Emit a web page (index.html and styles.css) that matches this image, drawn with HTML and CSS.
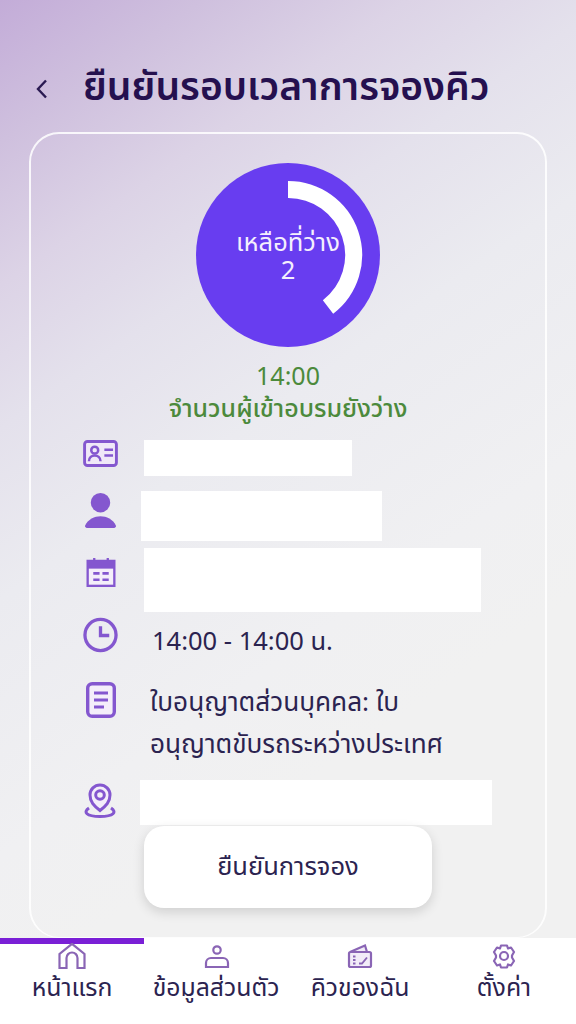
FILE: index.html
```html
<!DOCTYPE html>
<html lang="th">
<head>
<meta charset="utf-8">
<title>ยืนยันรอบเวลาการจองคิว</title>
<link rel="stylesheet" href="styles.css">
</head>
<body>
<div class="screen">
  <header class="top">
    <svg class="back" viewBox="0 0 14 22"><path d="M11 2.500 3 11l8 8.500" fill="none" stroke="#2a1a52" stroke-width="2.400"/></svg>
    <h1>ยืนยันรอบเวลาการจองคิว</h1>
  </header>
  <main class="card">
    <div class="ring">
      <svg class="ring-svg" viewBox="0 0 184 184">
        <circle cx="92" cy="92" r="92" fill="#683df0"/>
        <path d="M92 26.500A65.500 65.500 0 0 1 132 144" fill="none" stroke="#fff" stroke-width="17"/>
      </svg>
      <div class="ring-text"><span>เหลือที่ว่าง</span><span>2</span></div>
    </div>
    <div class="time">14:00</div>
    <div class="status">จำนวนผู้เข้าอบรมยังว่าง</div>
    <div class="rows">
      <div class="row r1">
        <svg class="ico" viewBox="0 0 36 28"><rect x="1.500" y="1.500" width="33" height="25" rx="3" fill="#f0e8f8" stroke="#8457cf" stroke-width="3"/><circle cx="12" cy="10.500" r="3.600" fill="none" stroke="#8457cf" stroke-width="2.600"/><path d="M6 22c0-8 12-8 12 0M22 10h9M22 16h9" fill="none" stroke="#8457cf" stroke-width="2.600"/></svg>
        <div class="blank b1"></div>
      </div>
      <div class="row r2">
        <svg class="ico" viewBox="0 0 32 36"><circle cx="16" cy="10" r="10" fill="#8457cf"/><path d="M0 34C3 27 10 24 16 24s13 3 16 10c0 1-1 2-2 2H2c-1 0-2-1-2-2z" fill="#8457cf"/></svg>
        <div class="blank b2"></div>
      </div>
      <div class="row r3">
        <svg class="ico" viewBox="0 0 30 30"><path d="M8 0v4M22 0v4" stroke="#8457cf" stroke-width="2.400"/><rect x="1.200" y="3" width="27.600" height="25.800" fill="#f4eefa" stroke="#8457cf" stroke-width="2.400"/><rect x="1" y="3" width="28" height="8" fill="#8457cf"/><path d="M7 16h6.500M16.500 16H23M7 22.500h6.500M16.500 22.500H23" stroke="#8457cf" stroke-width="2.800"/></svg>
        <div class="blank b3"></div>
      </div>
      <div class="row r4">
        <svg class="ico" viewBox="0 0 36 36"><circle cx="18" cy="18" r="16" fill="none" stroke="#8457cf" stroke-width="3.400"/><path d="M18 9v9.500h9" fill="none" stroke="#8457cf" stroke-width="3.400"/></svg>
        <div class="txt">14:00 - 14:00 น.</div>
      </div>
      <div class="row r5">
        <svg class="ico" viewBox="0 0 30 36"><rect x="1.700" y="1.700" width="26.600" height="32.600" rx="4.500" fill="#f4eefa" stroke="#8457cf" stroke-width="3.400"/><path d="M8 11h14M8 18h14M8 25h10" stroke="#8457cf" stroke-width="3"/></svg>
        <div class="txt">ใบอนุญาตส่วนบุคคล: ใบ<br>อนุญาตขับรถระหว่างประเทศ</div>
      </div>
      <div class="row r6">
        <svg class="ico" viewBox="0 0 32 36"><path d="M16 28.500C10 24 6 20 6 13a10 10 0 0 1 20 0c0 7-4 11-10 15.500z" fill="#f4eefa" stroke="#8457cf" stroke-width="3"/><circle cx="16" cy="13" r="4.300" fill="none" stroke="#8457cf" stroke-width="3"/><path d="M5 26c-6 4-3 8.500 11 8.500s17-4.500 11-8.500" fill="none" stroke="#8457cf" stroke-width="3"/></svg>
        <div class="blank b6"></div>
      </div>
    </div>
    <button class="confirm" type="button">ยืนยันการจอง</button>
  </main>
  <nav class="tabs">
    <div class="tab active">
      <svg class="tab-ico" viewBox="0 0 28 26"><path d="M1.500 25V11L14 .8 26.500 11v14h-7V15a5.500 5.500 0 0 0-11 0v10z" fill="none" stroke="#8a65b5" stroke-width="2.200"/></svg>
      <span>หน้าแรก</span>
    </div>
    <div class="tab">
      <svg class="tab-ico" viewBox="0 0 28 26"><circle cx="15" cy="7" r="3.700" fill="none" stroke="#8a65b5" stroke-width="2.200"/><path d="M4 24v-4a5 5 0 0 1 5-5h12a5 5 0 0 1 5 5v4z" fill="none" stroke="#8a65b5" stroke-width="2.200"/></svg>
      <span>ข้อมูลส่วนตัว</span>
    </div>
    <div class="tab">
      <svg class="tab-ico" viewBox="0 0 28 26"><path d="M4 9 19 2.500 21 9" fill="#f2ecf8" stroke="#8a65b5" stroke-width="2.200"/><rect x="3" y="9" width="22" height="15" rx="1.500" fill="#f2ecf8" stroke="#8a65b5" stroke-width="2.200"/><path d="M7 13.500h2.500M7 17h2.500M7 20.500h2.500M13 20.500h3l5-6" fill="none" stroke="#8a65b5" stroke-width="1.900"/></svg>
      <span>คิวของฉัน</span>
    </div>
    <div class="tab">
      <svg class="tab-ico" viewBox="0 0 28 26"><path d="M11 2.500h6l1 3 3-1 3 4.500-2 3.500v2l2 3.500-3 4.500-3-1-1 3h-6l-1-3-3 1-3-4.500 2-3.500v-2L4 9l3-4.500 3 1z" fill="none" stroke="#8a65b5" stroke-width="2.200" stroke-linejoin="round"/><circle cx="14" cy="13" r="4" fill="none" stroke="#8a65b5" stroke-width="2.200"/></svg>
      <span>ตั้งค่า</span>
    </div>
  </nav>
</div>
</body>
</html>
```
FILE: styles.css
```css
* { box-sizing: border-box; }
html, body { margin: 0; padding: 0; }
body { font-family: "Noto Sans Thai", "Noto Sans", "Open Sans", "DejaVu Sans", sans-serif; }
.screen {
  width: 576px; height: 1024px; overflow: hidden;
  display: flex; flex-direction: column;
  background: linear-gradient(145deg, #c3acd8 0%, #cfc0de 10%, #dcd3e6 20%, #e4e1ec 30%, #ebebf0 42%, #f0f0f2 60%, #f1f1f1 70%);
}
.top { height: 132px; flex: none; display: flex; align-items: center; padding: 46px 0 0 35px; }
.back { width: 14px; height: 22px; flex: none; }
h1 { margin: 0 0 0 34px; font-size: 39px; line-height: 44px; font-weight: 600; color: #25104f; white-space: nowrap; }
.card {
  flex: none; height: 806px; margin: 0 29px; border: 2px solid rgba(255,255,255,.85); border-bottom-width: 1px;
  border-radius: 30px; display: flex; flex-direction: column; align-items: center; padding-top: 29px;
}
.ring { width: 184px; height: 184px; position: relative; flex: none; }
.ring-svg { width: 184px; height: 184px; display: block; }
.ring-text {
  position: absolute; inset: 0; display: flex; flex-direction: column; align-items: center; justify-content: center;
  color: #f4effd; font-size: 25.500px; line-height: 28px; padding-top: 3px;
}
.time { margin-top: 15px; font-size: 25px; line-height: 30px; color: #4c8a3c; }
.status { font-size: 25px; line-height: 34px; font-weight: 500; color: #4c8a3c; }
.rows { align-self: stretch; display: flex; flex-direction: column; }
.row { display: flex; align-items: flex-start; color: #2b2350; }
.ico { flex: none; display: block; }
.blank { background: #fff; }
.txt { font-size: 25.500px; line-height: 42px; white-space: nowrap; }
.r1 { margin-top: 14px; padding-left: 52px; height: 51px; }
.r1 .ico { width: 35px; height: 27px; }
.b1 { width: 208px; height: 36px; margin-left: 26px; }
.r2 { padding-left: 53px; height: 57px; }
.r2 .ico { width: 33px; height: 35px; margin-top: 2px; }
.b2 { width: 241px; height: 50px; margin-left: 24px; }
.r3 { padding-left: 55px; height: 70px; }
.r3 .ico { width: 30px; height: 29px; margin-top: 10px; }
.b3 { width: 337px; height: 64px; margin-left: 28px; }
.r4 { padding-left: 52px; height: 61px; }
.r4 .ico { width: 35px; height: 36px; margin-top: -1px; }
.r4 .txt { margin-left: 34px; margin-top: 3px; }
.r5 { padding-left: 55px; height: 101px; }
.r5 .ico { width: 30px; height: 36px; margin-top: 3px; }
.r5 .txt { margin-left: 34px; margin-top: 3px; font-size: 26.200px; }
.r6 { padding-left: 53px; height: 46px; }
.r6 .ico { width: 32px; height: 36px; margin-top: 2px; }
.b6 { width: 352px; height: 45px; margin-left: 24px; }
.confirm {
  flex: none; width: 288px; height: 82px; border: 0; border-radius: 20px; background: #fff;
  font: inherit; font-size: 25.500px; color: #2b2350; box-shadow: 0 4px 12px rgba(0,0,0,.14);
}
.tabs { flex: 1; display: grid; grid-template-columns: repeat(4, 144px); background: #fff; position: relative; }
.tab { display: flex; flex-direction: column; align-items: center; border-top: 6px solid transparent; color: #2b2350; font-size: 24.800px; line-height: 40px; white-space: nowrap; }
.tab.active { border-top-color: #7a1fd6; }
.tab-ico { width: 28px; height: 26px; flex: none; margin-top: -1px; position: relative; }
```
